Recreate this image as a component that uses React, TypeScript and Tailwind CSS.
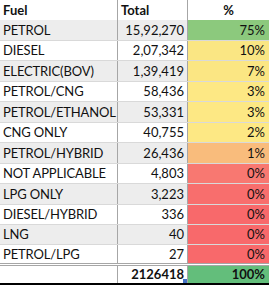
import React from "react";

type Row = { fuel: string; total: string; pct: string; color: string; band: boolean; h: string };

const rows: Row[] = [
  { fuel: "PETROL", total: "15,92,270", pct: "75%", color: "bg-[#8cc97d]", band: true, h: "h-[21px]" },
  { fuel: "DIESEL", total: "2,07,342", pct: "10%", color: "bg-[#fae683]", band: false, h: "h-[20px]" },
  { fuel: "ELECTRIC(BOV)", total: "1,39,419", pct: "7%", color: "bg-[#fbe683]", band: true, h: "h-[21px]" },
  { fuel: "PETROL/CNG", total: "58,436", pct: "3%", color: "bg-[#fde884]", band: false, h: "h-[20px]" },
  { fuel: "PETROL/ETHANOL", total: "53,331", pct: "3%", color: "bg-[#fde884]", band: true, h: "h-[21px]" },
  { fuel: "CNG ONLY", total: "40,755", pct: "2%", color: "bg-[#fde884]", band: false, h: "h-[20px]" },
  { fuel: "PETROL/HYBRID", total: "26,436", pct: "1%", color: "bg-[#f9bc7c]", band: true, h: "h-[21px]" },
  { fuel: "NOT APPLICABLE", total: "4,803", pct: "0%", color: "bg-[#f87871]", band: false, h: "h-[20px]" },
  { fuel: "LPG ONLY", total: "3,223", pct: "0%", color: "bg-[#f86e6d]", band: true, h: "h-[21px]" },
  { fuel: "DIESEL/HYBRID", total: "336", pct: "0%", color: "bg-[#f8696b]", band: false, h: "h-[20px]" },
  { fuel: "LNG", total: "40", pct: "0%", color: "bg-[#f8696b]", band: true, h: "h-[20px]" },
  { fuel: "PETROL/LPG", total: "27", pct: "0%", color: "bg-[#f8696b]", band: false, h: "h-[21px]" },
];

export default function App() {
  return (
    <div
      className="w-[269px] h-[285px] overflow-hidden bg-white text-[13px] text-[#111] leading-none"
      style={{ fontFamily: "Lato, 'Liberation Sans', sans-serif" }}
    >
      {/* header */}
      <div className="flex h-[20px] bg-white">
        <div className="w-[118px] border-r border-[#a6a6a6] pl-[3px] flex items-center font-bold">Fuel</div>
        <div className="w-[70px] border-r border-[#a6a6a6] pl-[3px] flex items-center font-bold">Total</div>
        <div className="flex-1 flex items-center justify-center font-bold">%</div>
      </div>
      {rows.map((r, i) => {
        const last = i === rows.length - 1;
        const bg = r.band ? "bg-[#ededed]" : "bg-white";
        const bottom = last
          ? "border-b-[3px] border-double border-b-[#a6a6a6]"
          : "border-b border-b-[#d9d9d9]";
        return (
          <div key={r.fuel} className={`flex ${r.h} ${bottom}`}>
            <div className={`w-[118px] border-r border-r-[#a6a6a6] pl-[3px] flex items-center tracking-[-0.15px] whitespace-nowrap ${bg}`}>{r.fuel}</div>
            <div className={`w-[70px] border-r border-r-[#a6a6a6] pr-[3px] flex items-center justify-end ${bg}`}>{r.total}</div>
            <div className={`flex-1 pr-[4px] flex items-center justify-end ${r.color}`}>{r.pct}</div>
          </div>
        );
      })}
      {/* total row */}
      <div className="flex h-[19px] border-b-2 border-b-black">
        <div className="w-[118px] border-r border-r-[#a6a6a6] bg-white"></div>
        <div className="relative w-[70px] border-r border-r-[#a6a6a6] pr-[3px] flex items-center justify-end font-bold bg-white">
          2126418
          <div className="absolute right-0 bottom-0 w-[4px] h-[4px] bg-[#4472c4]"></div>
        </div>
        <div className="flex-1 pr-[4px] flex items-center justify-end font-bold bg-[#63be7b]">100%</div>
      </div>
    </div>
  );
}
